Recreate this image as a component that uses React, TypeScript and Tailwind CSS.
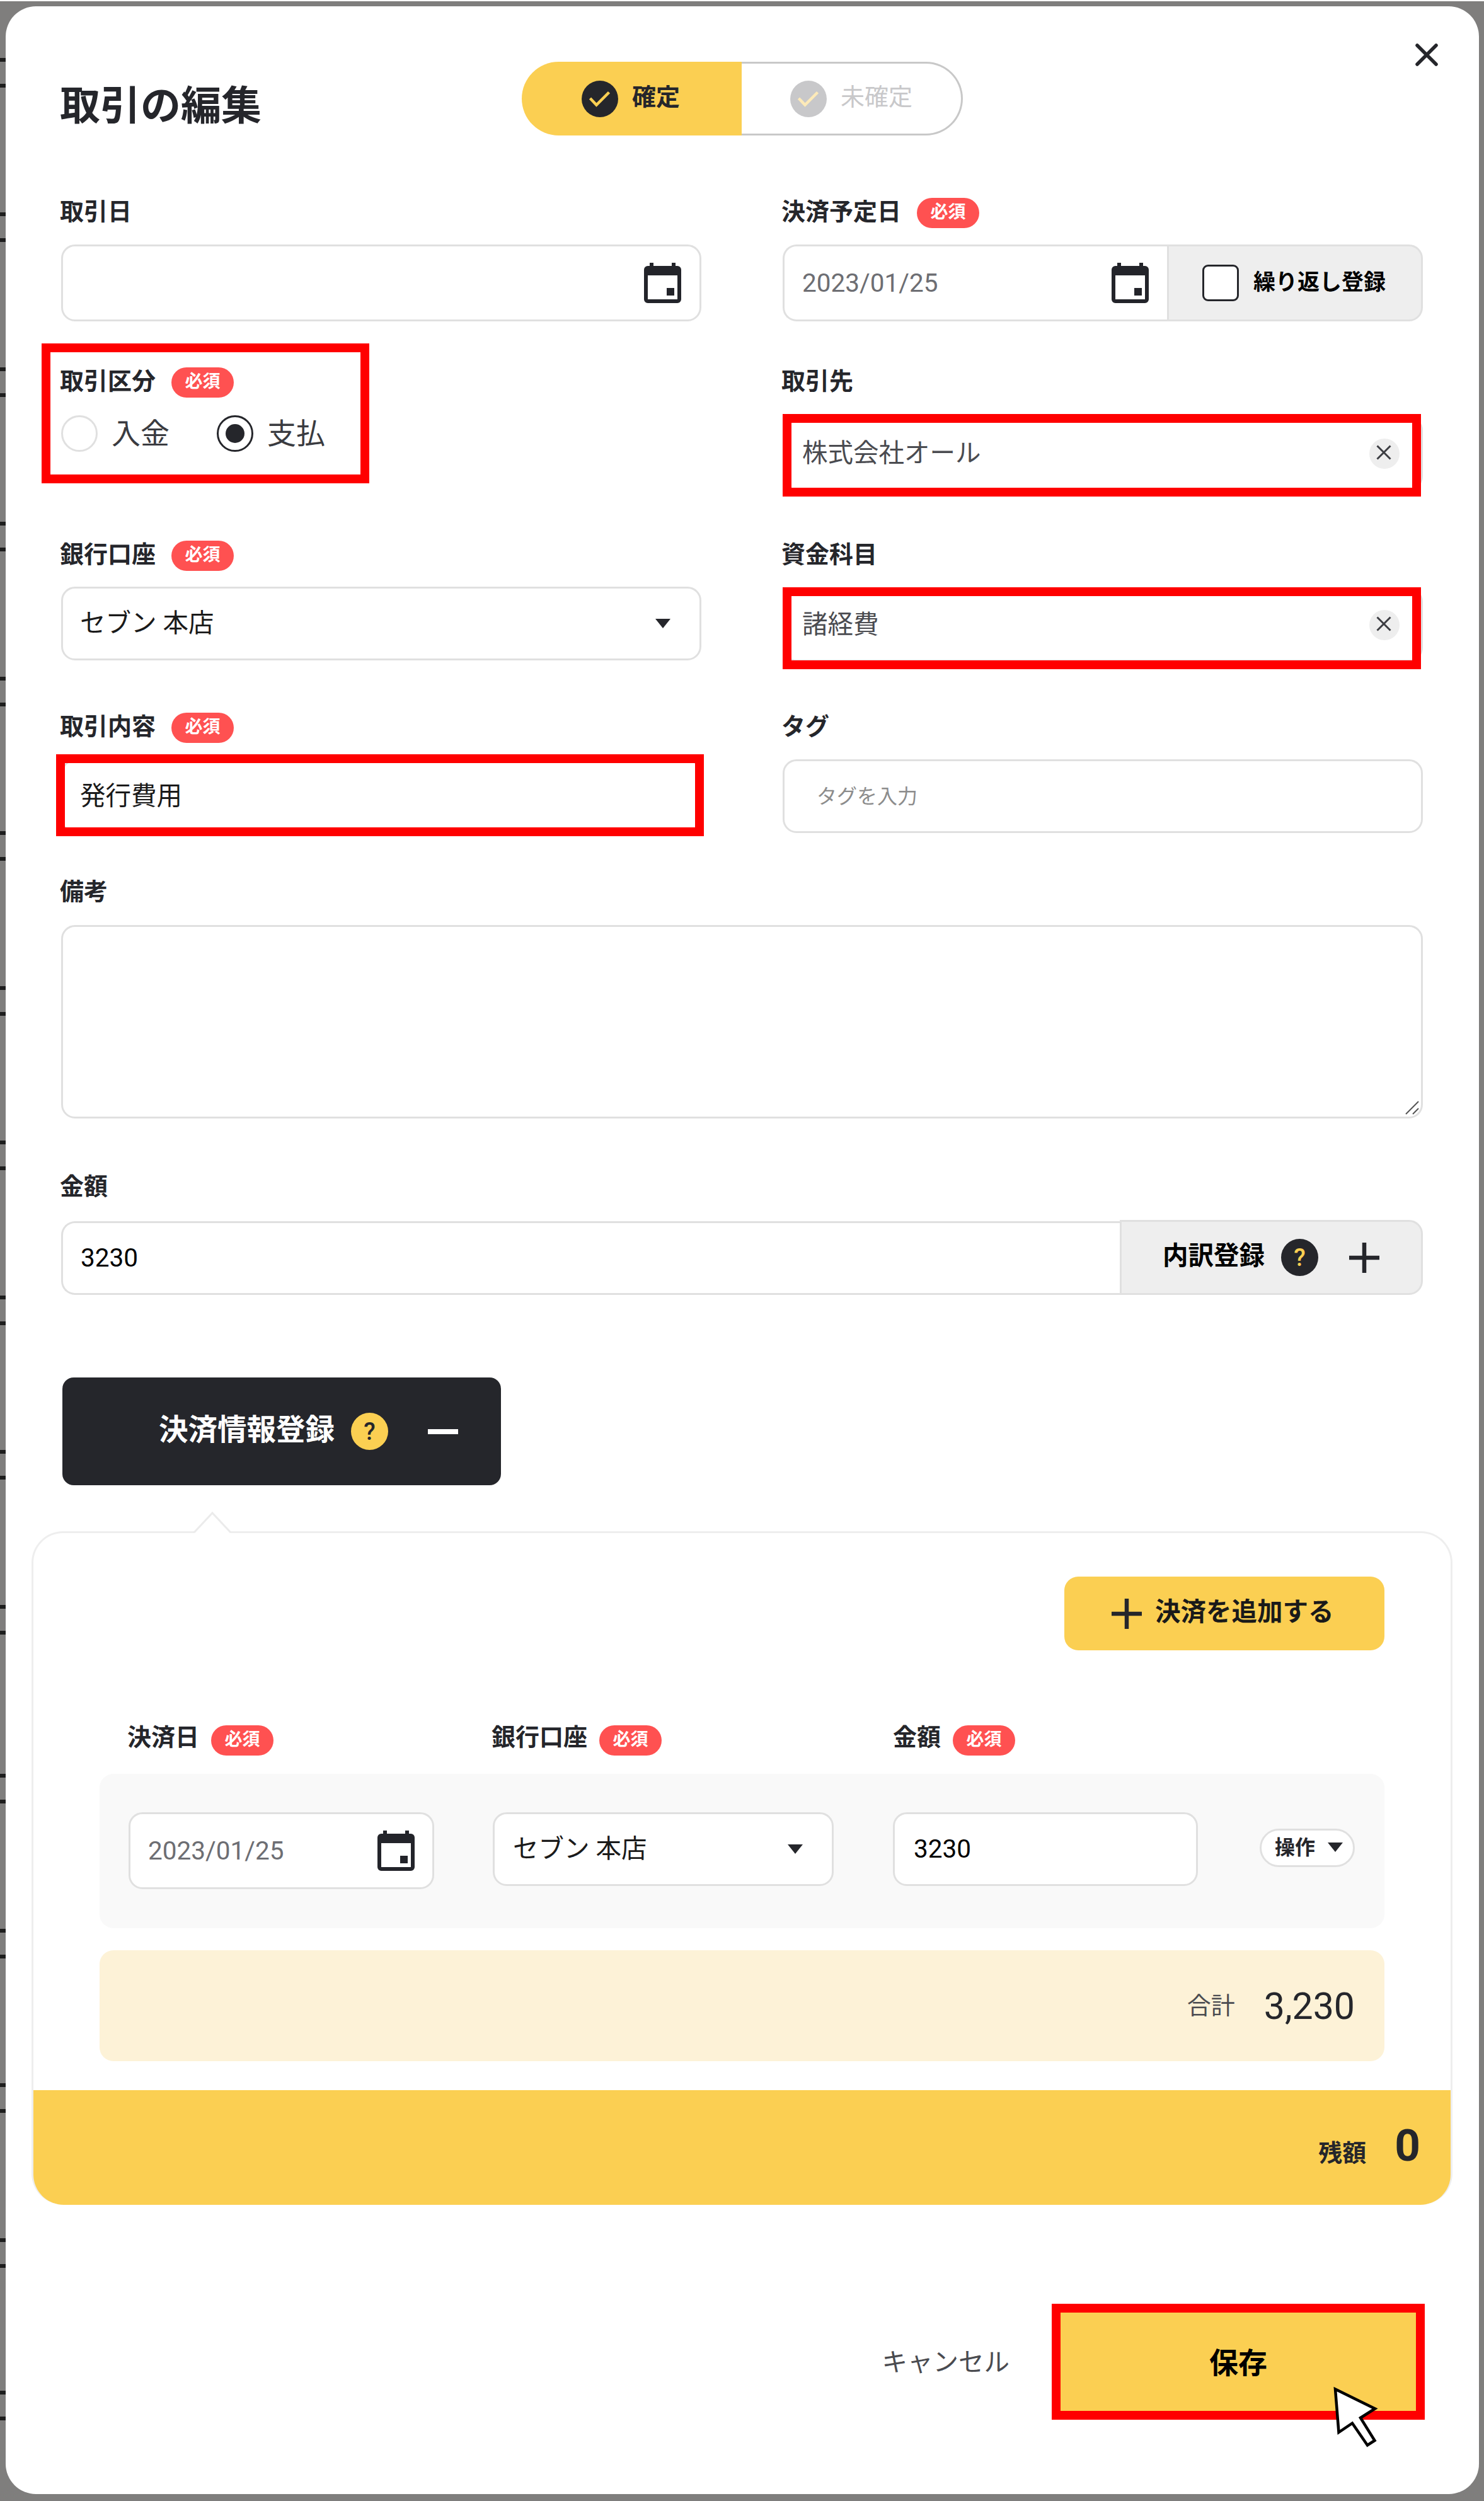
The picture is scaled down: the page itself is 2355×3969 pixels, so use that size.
import { useState, type ReactNode } from "react";
import clsx from "clsx";

// Marcas escuras da tabela que aparece atrás do modal (margin-top de cada par)
const BACKDROP_ROWS = [
  "mt-[90px]",
  "mt-[198px]",
  "mt-[199px]",
  "mt-[198px]",
  "mt-[199px]",
  "mt-[198px]",
  "mt-[199px]",
  "mt-[198px]",
  "mt-[199px]",
  "mt-[198px]",
  "mt-[199px]",
  "mt-[221px]",
  "mt-[199px]",
  "mt-[198px]",
  "mt-[199px]",
  "mt-[195px]",
];

function RequiredBadge() {
  return (
    <span className="flex h-[48px] w-[99px] shrink-0 items-center justify-center rounded-full bg-[#ff5151] text-[28px] font-bold leading-none text-white">
      <span className="pb-[3px]">必須</span>
    </span>
  );
}

function Label({
  text,
  required,
  compact,
}: {
  text: string;
  required?: boolean;
  compact?: boolean;
}) {
  return (
    <div
      className={clsx(
        "-ml-[2px] flex h-[48px] items-center whitespace-nowrap",
        compact ? "gap-[19px]" : "gap-[25px]",
      )}
    >
      <span
        className={clsx(
          "text-[38px] font-bold leading-none text-[#25262b]",
          compact ? "pb-[10px]" : "pb-[5px]",
        )}
      >
        {text}
      </span>
      {required && <RequiredBadge />}
    </div>
  );
}

// Moldura vermelha de destaque
function Highlight({ className }: { className: string }) {
  return (
    <div
      className={clsx(
        "pointer-events-none absolute border-[14px] border-[#ff0000]",
        className,
      )}
    />
  );
}

function Box({
  className,
  gray,
  children,
}: {
  className?: string;
  gray?: boolean;
  children?: ReactNode;
}) {
  return (
    <div
      className={clsx(
        "flex items-center rounded-[22px] border-[3px] border-[#e0e0e0] text-[40.5px] leading-none",
        gray ? "bg-[#eeeeee]" : "bg-white",
        className,
      )}
    >
      {children}
    </div>
  );
}

function CalendarIcon() {
  return (
    <svg width="59" height="64" viewBox="0 0 59 64" className="shrink-0">
      <path
        fill="#23242a"
        fillRule="evenodd"
        d="M9 0h6v5h29V0h6v5h3a6 6 0 0 1 6 6v47a6 6 0 0 1-6 6H6a6 6 0 0 1-6-6V11a6 6 0 0 1 6-6h3zM6 20v38h47V20z"
      />
      <rect x="36" y="40" width="12" height="12" fill="#23242a" />
    </svg>
  );
}

function CheckCircle({ muted }: { muted?: boolean }) {
  return (
    <svg width="58" height="58" viewBox="0 0 58 58" className="shrink-0">
      <circle cx="29" cy="29" r="29" fill={muted ? "#c8c8ca" : "#25262b"} />
      <path
        d="M13.5 28 23.500 38.500 43.500 18.500"
        fill="none"
        stroke={muted ? "#fdeab8" : "#fbcf52"}
        strokeWidth="4.5"
      />
    </svg>
  );
}

function Caret({ className }: { className?: string }) {
  return (
    <svg width="24" height="15" viewBox="0 0 24 15" className={clsx("shrink-0", className)}>
      <path d="M0 0h24L12 15z" fill="#25262b" />
    </svg>
  );
}

function Plus({ className }: { className?: string }) {
  return (
    <svg width="48" height="48" viewBox="0 0 48 48" className={clsx("shrink-0", className)}>
      <path d="M24 0v48M0 24h48" stroke="#25262b" strokeWidth="6.5" />
    </svg>
  );
}

function HelpDot({ className }: { className: string }) {
  return (
    <span
      className={clsx(
        "flex size-[59px] shrink-0 items-center justify-center rounded-full text-[38px] font-medium leading-none",
        className,
      )}
    >
      ?
    </span>
  );
}

function ClearButton() {
  return (
    <button className="flex size-[48px] shrink-0 items-center justify-center rounded-full bg-[#eeeeee]">
      <svg width="24" height="24" viewBox="0 0 24 24" className="mb-[3px] mr-[3px]">
        <path d="M1.5 1.5l21 21M22.5 1.5l-21 21" stroke="#3c3d42" strokeWidth="3" />
      </svg>
    </button>
  );
}

function Radio({
  label,
  checked,
  onClick,
}: {
  label: string;
  checked: boolean;
  onClick: () => void;
}) {
  return (
    <button onClick={onClick} className="flex items-center gap-[22px]">
      <span
        className={clsx(
          "flex size-[58px] items-center justify-center rounded-full border-[3px]",
          checked ? "border-[#25262b]" : "border-[#e0e0e0]",
        )}
      >
        {checked && <span className="size-[30px] rounded-full bg-[#25262b]" />}
      </span>
      <span className="text-[46px] leading-none text-[#3a3b40]">{label}</span>
    </button>
  );
}

function Cursor({ className }: { className: string }) {
  return (
    <svg width="76" height="106" viewBox="0 0 76 106" className={className}>
      <path
        d="M4 8.500 67 39.500 44 54 66.500 90 55 97.500 31 62.500 9.500 77z"
        fill="#fff"
        stroke="#000"
        strokeWidth="4.5"
      />
    </svg>
  );
}

export default function App() {
  const [kind, setKind] = useState<"in" | "out">("out");

  return (
    <div className="relative h-[3969px] w-[2355px] overflow-hidden border-t-2 border-white bg-[#7f7e7d] font-['Roboto','Noto_Sans_CJK_JP',sans-serif] text-[#25262b]">
      {/* Fundo atrás do modal */}
      <div className="absolute left-0 top-0 flex w-[20px] flex-col">
        {BACKDROP_ROWS.map((margin, i) => (
          <div key={i} className={clsx("h-[47px] border-y-[6px] border-[#1d1d1d]", margin)} />
        ))}
      </div>

      <div className="relative ml-[9px] mt-[8px] h-[3948px] w-[2338px] rounded-[48px] bg-white pl-[88px] pr-[89px]">
        <header className="flex h-[304px] items-start">
          <h1 className="-ml-[2px] mt-[127px] w-[733px] text-[64px] font-bold leading-none">
            取引の編集
          </h1>
          <div className="mt-[88px] flex h-[117px] w-[700px] text-[38px] leading-none">
            <div className="flex w-[349px] items-center gap-[22px] rounded-l-full bg-[#fbcf52] pl-[95px]">
              <CheckCircle />
              <span className="pb-[5px] font-bold">確定</span>
            </div>
            <div className="flex w-[351px] items-center gap-[22px] rounded-r-full border-[3px] border-l-0 border-[#c8c8c8] pl-[77px] text-[#c8c8ca]">
              <CheckCircle muted />
              <span className="pb-[5px]">未確定</span>
            </div>
          </div>
          <button className="-mr-[24px] ml-auto mt-[59px]">
            <svg width="36" height="36" viewBox="0 0 36 36">
              <path
                d="M3 3l30 30M33 3L3 33"
                stroke="#25262b"
                strokeWidth="5.5"
                strokeLinecap="round"
              />
            </svg>
          </button>
        </header>

        <div className="grid grid-cols-[1016px_1016px] gap-x-[129px]">
          <div className="h-[269px]">
            <Label text="取引日" />
            <Box className="mt-[26px] h-[122px] justify-end pr-[29px]">
              <CalendarIcon />
            </Box>
          </div>
          <div className="h-[269px]">
            <Label text="決済予定日" required />
            <div className="mt-[26px] flex h-[122px]">
              <Box className="w-[610px] justify-between rounded-r-none border-r-0 pl-[28px] pr-[29px] text-[#6d6e73]">
                2023/01/25
                <CalendarIcon />
              </Box>
              <Box gray className="flex-1 rounded-l-none pl-[53px]">
                <span className="size-[58px] rounded-[9px] border-[3px] border-[#25262b] bg-white" />
                <span className="ml-[23px] pb-[2px] text-[35px] font-bold text-black">
                  繰り返し登録
                </span>
              </Box>
            </div>
          </div>

          <div className="relative h-[275px]">
            <Label text="取引区分" required />
            <div className="mt-[28px] flex gap-[75px]">
              <Radio label="入金" checked={kind === "in"} onClick={() => setKind("in")} />
              <Radio label="支払" checked={kind === "out"} onClick={() => setKind("out")} />
            </div>
            <Highlight className="-left-[31px] -top-[38px] h-[222px] w-[520px]" />
          </div>
          <div className="h-[275px]">
            <Label text="取引先" />
            <div className="relative mt-[30px]">
              <Box className="h-[117px] justify-between pl-[28px] pr-[34px] text-[#4a4b50]">
                株式会社オール
                <ClearButton />
              </Box>
              <Highlight className="-top-[4px] left-0 h-[131px] w-[1013px]" />
            </div>
          </div>

          <div className="h-[273px]">
            <Label text="銀行口座" required />
            <Box className="mt-[25px] h-[117px] justify-between pl-[27px] pr-[46px] text-[#1a1a1a]">
              セブン 本店
              <Caret />
            </Box>
          </div>
          <div className="h-[273px]">
            <Label text="資金科目" />
            <div className="relative mt-[27px]">
              <Box className="h-[117px] justify-between pl-[28px] pr-[34px] text-[#4a4b50]">
                諸経費
                <ClearButton />
              </Box>
              <Highlight className="-top-px left-0 h-[130px] w-[1013px]" />
            </div>
          </div>

          <div className="h-[262px]">
            <Label text="取引内容" required />
            <div className="relative mt-[26px]">
              <Box className="h-[117px] pl-[27px] text-[#1a1a1a]">発行費用</Box>
              <Highlight className="-left-[8px] -top-[8px] h-[130px] w-[1028px]" />
            </div>
          </div>
          <div className="h-[262px]">
            <Label text="タグ" />
            <Box className="mt-[26px] h-[117px] pl-[51px]">
              <span className="text-[32px] text-[#8c8c8c]">タグを入力</span>
            </Box>
          </div>
        </div>

        <Label text="備考" />
        <div className="mt-[27px] flex h-[307px] items-end justify-end rounded-[22px] border-[3px] border-[#e0e0e0] p-[3px]">
          <svg width="22" height="22" viewBox="0 0 22 22">
            <path d="M1 21L21 1M12 21l9-9" stroke="#555" strokeWidth="2" />
          </svg>
        </div>

        <div className="mt-[86px]">
          <Label text="金額" />
          <div className="mt-[27px] flex items-end">
            <Box className="h-[117px] w-[1680px] rounded-r-none border-r-0 pl-[28px] text-black">
              3230
            </Box>
            <Box gray className="h-[119px] flex-1 rounded-l-none pl-[65px]">
              <span className="pb-[4px] font-bold text-black">内訳登録</span>
              <HelpDot className="ml-[26px] bg-[#25262b] text-[#fbcf52]" />
              <Plus className="ml-[49px]" />
            </Box>
          </div>
        </div>

        <button className="ml-[2px] mt-[131px] flex h-[171px] w-[696px] items-center rounded-[18px] bg-[#25262b] pl-[153px] text-white">
          <span className="pb-[4px] text-[46.5px] font-bold leading-none">決済情報登録</span>
          <HelpDot className="ml-[26px] bg-[#fbcf52] text-[#25262b]" />
          <span className="ml-[63px] h-[8px] w-[48px] bg-white" />
        </button>

        <section className="relative -ml-[47px] mt-[73px] flex h-[1069px] w-[2255px] flex-col rounded-[50px] border-[3px] border-b-0 border-[#eeeeee]">
          {/* Ponta do balão */}
          <svg
            width="62"
            height="36"
            viewBox="0 0 62 36"
            className="absolute -top-[34px] left-[253px]"
          >
            <path d="M2 34L31 2l29 32v2H2z" fill="#fff" />
            <path d="M2 33L31 2l29 31" fill="none" stroke="#ebebeb" strokeWidth="3" />
          </svg>

          <div className="mx-[105px] flex h-[882px] flex-col">
            <button className="mt-[69px] flex h-[117px] w-[508px] items-center self-end rounded-[22px] bg-[#fbcf52] pl-[75px]">
              <Plus />
              <span className="ml-[21px] pb-[5px] text-[40.5px] font-bold leading-none text-[#1a1a1a]">
                決済を追加する
              </span>
            </button>

            <div className="mt-[119px] grid grid-cols-[578px_637px_1fr] pl-[46px]">
              <Label text="決済日" required compact />
              <Label text="銀行口座" required compact />
              <Label text="金額" required compact />
            </div>

            <div className="mt-[29px] flex h-[245px] items-start rounded-[22px] bg-[#f9f9f9] pl-[46px] pt-[61px]">
              <Box className="h-[122px] w-[485px] justify-between pl-[28px] pr-[28px] text-[#6d6e73]">
                2023/01/25
                <CalendarIcon />
              </Box>
              <Box className="ml-[93px] h-[117px] w-[541px] justify-between pl-[29px] pr-[46px] text-[#1a1a1a]">
                セブン 本店
                <Caret />
              </Box>
              <Box className="ml-[94px] h-[117px] w-[484px] pl-[30px] text-black">3230</Box>
              <button className="ml-[98px] mt-[26px] flex h-[61px] w-[151px] items-center rounded-full border-[3px] border-[#e0e0e0] bg-white pl-[21px]">
                <span className="pb-[2px] text-[32px] font-bold leading-none">操作</span>
                <Caret className="mb-[2px] ml-[20px]" />
              </button>
            </div>

            <div className="mt-[35px] flex h-[176px] items-center justify-end rounded-[22px] bg-[#fdf2d7] pr-[47px] leading-none">
              <span className="text-[38px] text-[#4a4b50]">合計</span>
              <span className="ml-[46px] text-[59px]">3,230</span>
            </div>
          </div>

          <div className="mt-auto flex h-[182px] items-center justify-end rounded-b-[48px] bg-[#fbcf52] pr-[48px] leading-none">
            <span className="pt-[18px] text-[38px] font-bold">残額</span>
            <span className="ml-[45px] pb-[8px] text-[71px] font-bold">0</span>
          </div>
        </section>

        <footer className="mt-[157px] flex h-[184px] items-center justify-end">
          <button className="pt-[2px] text-[40.5px] leading-none text-[#4a4b50]">キャンセル</button>
          <div className="relative -mr-[3px] ml-[67px] h-full w-[592px]">
            <button className="flex size-full items-center justify-center bg-[#fbcf52] pt-[3px] text-[46px] font-bold leading-none text-black">
              保存
            </button>
            <Highlight className="inset-0" />
            <Cursor className="absolute left-[446px] top-[127px]" />
          </div>
        </footer>
      </div>
    </div>
  );
}
